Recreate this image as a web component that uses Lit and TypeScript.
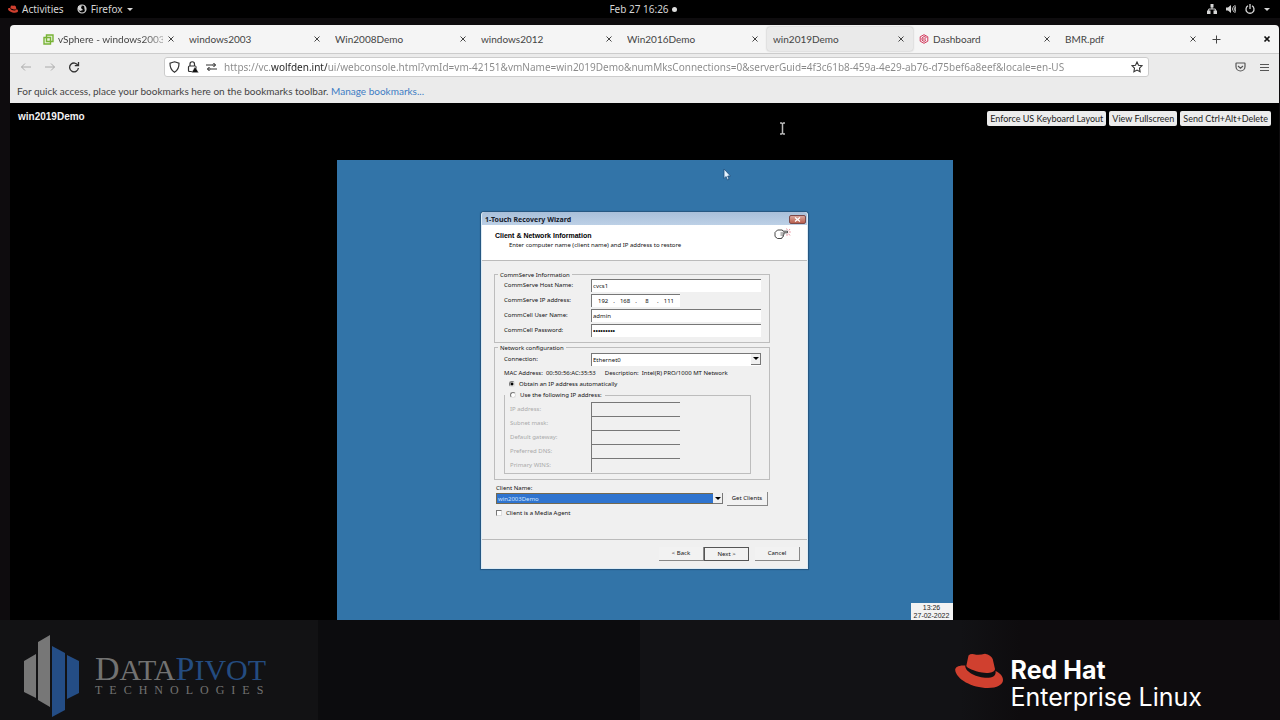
import { LitElement, html, css, svg, nothing } from "lit";
import { customElement, state } from "lit/decorators.js";
import { classMap } from "lit/directives/class-map.js";

const hat = svg`
  <path d="M11.300 13L13.500 2.500Q15.500.5 19 1.200 24 2.500 30 .7 36 2 37.700 6L40 16C40 20 32 20.500 27 19.600 19 18 12 15 11.300 13z"/>
  <path d="M10.300 12.500C3 12 0 14.500.2 17 1 26 17 35 33 35 42 35 48 31.500 48 27 48 23 45 20 40.500 18 41.500 23 37 25.200 30 24.800 20 24 9.500 18 10.300 12.500z"/>`;

@customElement("wizard-dialog")
class WizardDialog extends LitElement {
  static styles = css`
    :host { display: block; font: 6px/8px "Noto Sans", "Liberation Sans", sans-serif; color: #111; }
    * { box-sizing: border-box; }
    input, select, button { font: inherit; color: inherit; margin: 0; border-radius: 0; }
    .dialog { background: #f0f0f0; border: 1px solid #dcebf5; border-top: 0; box-shadow: 0 0 1px 1px #24557e; border-radius: 3px 3px 0 0; }
    .title { display: flex; justify-content: space-between; align-items: center; height: 13px; padding: 2px 1px 0 3px; background: linear-gradient(#a9bfd9, #bcd0e6); border-radius: 3px 3px 0 0; font: bold 7px/11px "Noto Sans", sans-serif; color: #16202c; }
    .close { width: 17px; height: 9px; padding: 0; border: 1px solid #7b4a4a; background: linear-gradient(#d9a79e, #b9604f); display: grid; place-items: center; border-radius: 2px; }
    .close svg { width: 7px; height: 5px; }
    .head { display: flex; justify-content: space-between; background: #fff; height: 36px; padding: 3px 16px 0 13px; border-bottom: 1px solid #bbb; }
    .intro { padding-top: 3px; }
    .head h1 { margin: 0; font: bold 7px/10px "Liberation Sans", sans-serif; color: #000; }
    .head p { margin: 0 0 0 14px; }
    .hand { width: 17px; height: 13px; }
    .body { padding: 10px 37px 0 12px; }
    fieldset { margin: 0; min-width: 0; border: 1px solid #bdbdbd; padding: 0 8px 0 9px; }
    legend { margin-left: -6px; padding: 0 2px; height: 8px; }
    .form { display: grid; grid-template-columns: 87px minmax(0, 1fr); row-gap: 2px; align-items: center; }
    .box { height: 13px; width: 100%; padding: 0 1px; background: #fff; border: solid #777; border-width: 1px 0 0 1px; outline: 0; }
    .box[type="password"] { font: 7px/8px "Liberation Sans", sans-serif; }
    .short { width: 89px; }
    .ip { display: flex; align-items: center; }
    .ip input { flex: 1; min-width: 0; width: 0; border: 0; padding: 0; text-align: center; background: none; outline: 0; }
    .group + .group { margin-top: 1px; }
    .first { padding-bottom: 5px; }
    .second { padding-bottom: 5px; }
    .second > .form { margin-top: 1px; }
    .drop { position: relative; display: block; }
    .drop select { appearance: none; width: 100%; height: 13px; padding: 0 12px 0 1px; background: #fff; border: solid #777; border-width: 1px 0 0 1px; display: block; outline: 0; }
    .arrow { position: absolute; right: 0; top: 1px; width: 10px; height: 11px; background: #f0f0f0; border: solid #777; border-width: 0 1px 1px 0; display: grid; place-items: center; pointer-events: none; }
    .arrow::after { content: ""; border: solid transparent; border-width: 3px 3px 0; border-top-color: #000; }
    .mac { margin: 3px 0 2px; display: flex; gap: 9px; white-space: nowrap; }
    .choice { display: flex; align-items: center; gap: 4px; height: 11px; }
    .choice input { appearance: none; width: 6px; height: 6px; background: #fff; border: 1px solid; border-color: #777 #ddd #ddd #777; flex: none; }
    .choice input[type="radio"] { border-radius: 50%; }
    .choice input[type="radio"]:checked { background: radial-gradient(circle, #000 0 1px, #fff 2px); }
    .radio { padding-left: 5px; }
    .manual { margin-right: 10px; padding: 0 0 1px 5px; }
    .manual legend { margin-left: -5px; padding: 0 3px 0 5px; height: 11px; }
    .manual .form { grid-template-columns: 81px 89px; row-gap: 0; color: #aaa; margin-top: 1px; }
    .manual .box { height: 14px; background: #f0f0f0; }
    .client { margin-top: 4px; padding: 0 2px; }
    .pick { display: grid; grid-template-columns: minmax(0, 1fr) 41px; gap: 4px; align-items: center; }
    .pick select { height: 11px; background: #2f74cf; border: 1px solid #74694f; color: #cfe4ff; }
    .pick .arrow { top: 0; }
    button { background: #f2f2f2; border: solid #888; border-width: 0 1px 1px 0; height: 14px; padding: 0; }
    .agent { margin-top: 2px; }
    .foot { display: flex; justify-content: flex-end; margin-top: 20px; padding: 7px 7px 7px 0; border-top: 1px solid #bbb; }
    .foot button { width: 45px; }
    .foot .next { border: 1px solid #555; }
    .foot .cancel { margin-left: 6px; }
  `;

  private row(id: string, label: string, field: unknown) {
    return html`<label for=${id}>${label}</label>${field}`;
  }

  render() {
    const manual = ["IP address:", "Subnet mask:", "Default gateway:", "Preferred DNS:", "Primary WINS:"];
    return html`<div class="dialog" role="dialog" aria-labelledby="t">
      <div class="title"><span id="t">1-Touch Recovery Wizard</span>
        <button class="close" aria-label="Close"><svg viewBox="0 0 7 5"><path d="M1 .5l5 4M6 .5l-5 4" stroke="#fff" stroke-width="1.300"/></svg></button></div>
      <div class="head"><div class="intro"><h1>Client &amp; Network Information</h1><p>Enter computer name (client name) and IP address to restore</p></div>
        <svg class="hand" viewBox="0 0 17 13"><path d="M1 4.500L3.500 2h4.800l.7 1.200h4.500v1.600H10v1.800l-.7.300v1.700l-1 .4-.6 1.500H3.500L1 8.500z" fill="#fff" stroke="#333" stroke-width=".9"/><path d="M6.500 5H10M6.500 7h2.800" stroke="#333" stroke-width=".7"/><path d="M12.500.5l1 1.700M16 1l-1.200 1.500M16.800 4h-2M16 7.500l-1.500-1.800M13 7.800V6" stroke="#e78a96" stroke-width=".9"/></svg></div>
      <div class="body">
        <fieldset class="group first"><legend>CommServe Information</legend>
          <div class="form">
            ${this.row("host", "CommServe Host Name:", html`<input id="host" class="box" value="cvcs1">`)}
            ${this.row("ip0", "CommServe IP address:", html`<div class="box short ip">
              ${["192", "168", "8", "111"].map((v, i) => html`${i ? html`<span>.</span>` : nothing}<input id="ip${i}" aria-label="Octet ${i + 1}" value=${v}>`)}</div>`)}
            ${this.row("user", "CommCell User Name:", html`<input id="user" class="box" value="admin">`)}
            ${this.row("pass", "CommCell Password:", html`<input id="pass" type="password" class="box" value="123456789">`)}
          </div></fieldset>
        <fieldset class="group second"><legend>Network configuration</legend>
          <div class="form">${this.row("conn", "Connection:", html`<span class="drop"><select id="conn"><option>Ethernet0</option></select><span class="arrow"></span></span>`)}</div>
          <div class="mac"><span>MAC Address: &nbsp;00:50:56:AC:35:53</span><span>Description: &nbsp;Intel(R) PRO/1000 MT Network</span></div>
          <label class="choice radio"><input type="radio" name="mode" checked>Obtain an IP address automatically</label>
          <fieldset class="manual"><legend><label class="choice"><input type="radio" name="mode">Use the following IP address:</label></legend>
            <div class="form">${manual.map((m, i) => this.row("m" + i, m, html`<input id="m${i}" class="box" disabled>`))}</div>
          </fieldset>
        </fieldset>
        <div class="client"><label for="client">Client Name:</label>
          <div class="pick"><span class="drop"><select id="client"><option>win2003Demo</option></select><span class="arrow"></span></span><button>Get Clients</button></div>
          <label class="choice agent"><input type="checkbox">Client is a Media Agent</label></div>
      </div>
      <div class="foot"><button>&lt; Back</button><button class="next">Next &gt;</button><button class="cancel">Cancel</button></div>
    </div>`;
  }
}

interface Tab { title: string; icon?: "vsphere" | "dash"; }

@customElement("app-root")
class AppRoot extends LitElement {
  @state() private active = 5;
  private tabs: Tab[] = [
    { title: "vSphere - windows2003", icon: "vsphere" }, { title: "windows2003" }, { title: "Win2008Demo" }, { title: "windows2012" },
    { title: "Win2016Demo" }, { title: "win2019Demo" }, { title: "Dashboard", icon: "dash" }, { title: "BMR.pdf" },
  ];

  static styles = css`
    :host { display: flex; flex-direction: column; min-height: 100vh; background: #0e0c0e; font: 10px/14px "Noto Sans", sans-serif; color: #444; }
    * { box-sizing: border-box; }
    button { font: inherit; color: inherit; border: 0; background: none; padding: 0; margin: 0; }
    svg { display: block; fill: none; stroke: currentColor; flex: none; }
    .bar { display: grid; grid-template-columns: 1fr auto 1fr; align-items: center; height: 18px; padding: 0 10px 0 8px; background: #000; color: #d6d6d6; }
    .left, .right, .clock { display: flex; align-items: center; }
    .left { gap: 13px; }
    .left button { display: flex; align-items: center; gap: 4px; }
    .right { justify-content: flex-end; gap: 9px; }
    .clock { gap: 3px; padding-left: 8px; }
    .dot { width: 5px; height: 5px; border-radius: 50%; background: #ddd; }
    .caret { border: solid transparent; border-width: 3px 3px 0; border-top-color: currentColor; }
    .solid { fill: currentColor; stroke: none; }
    .redhat { fill: #d0402f; stroke: none; }
    .window { flex: 1; display: flex; flex-direction: column; margin: 7px 1px 0 10px; border-radius: 4px 4px 0 0; overflow: hidden; background: #000; }
    .tabs { display: flex; height: 29px; padding: 0 8px 0 27px; background: #f5f5f5; border-bottom: 1px solid #ccc; align-items: center; font-family: Lato, sans-serif; }
    .tab { display: flex; align-items: center; flex: 0 1 146px; min-width: 0; height: 24px; padding: 0 8px 0 6px; gap: 4px; border-radius: 3px; }
    .tab.on { background: #eaeaea; box-shadow: 0 0 2px #aaa; }
    .green { color: #78b336; }
    .pink { color: #d3365a; }
    .name { flex: 1; min-width: 0; text-align: left; overflow: hidden; white-space: nowrap; }
    .name.long { -webkit-mask-image: linear-gradient(90deg, #000 80%, #0006); mask-image: linear-gradient(90deg, #000 80%, #0006); }
    .add { margin-left: 7px; }
    .quit { margin-left: auto; color: #111; }
    .nav { display: grid; grid-template-columns: 144px minmax(0, 1fr) 120px; align-items: center; height: 27px; background: #ebebeb; padding: 0 10px 1px; }
    .nav .left { gap: 12px; color: #aaa; }
    .nav .right { gap: 14px; color: #555; }
    .reload { color: #333; }
    .urlbar { display: flex; align-items: center; gap: 7px; height: 20px; padding: 0 5px 0 4px; background: #fff; border: 1px solid #ccc; border-radius: 3px; color: #333; }
    .url { flex: 1; min-width: 0; border: 0; outline: 0; padding: 0; font: inherit; color: transparent; background: linear-gradient(90deg, #888 46px, #222 46px 103px, #888 103px); -webkit-background-clip: text; background-clip: text; }
    .marks { background: #ebebeb; height: 22px; padding: 3px 7px 0 7px; font-family: Lato, sans-serif; }
    .marks a { color: #3d7cc4; text-decoration: none; }
    .console { display: flex; justify-content: space-between; padding: 8px 8px 0; height: 57px; align-items: flex-start; color: #f2f2f2; }
    .console h1 { margin: 0; font: bold 10px/12px "Liberation Sans", sans-serif; }
    .actions { display: flex; gap: 3px; }
    .actions button { background: #ececec; color: #222; border-radius: 2px; height: 15px; font: 9px/15px Lato, sans-serif; padding: 0 3px; }
    .desktop { position: relative; width: 616px; max-width: 100%; flex: 1; align-self: center; display: grid; place-items: center; background: #3274a8; }
    wizard-dialog { width: 327px; }
    .time { position: absolute; right: 0; bottom: 0; width: 42px; background: #f3f3f3; color: #222; font: 7px/8px "Liberation Sans", sans-serif; text-align: center; padding-top: 1px; white-space: nowrap; }
    .pointer { position: absolute; left: 386px; top: 8px; }
    .beam { position: absolute; left: 442px; top: -38px; }
    .brand { height: 100px; display: flex; justify-content: space-between; align-items: flex-start; padding: 15px 78px 0 24px; background: linear-gradient(90deg, #121214 0 318px, #0c0c0e 318px 640px, #121215 640px 960px, #0e0c0e 1020px); }
    .pivot, .rhel { display: flex; align-items: center; }
    .pivot { color: #727272; font-family: "Liberation Serif", serif; gap: 16px; }
    .word { font-size: 30px; line-height: 27px; }
    .word b { font-weight: 400; font-size: 34px; }
    .blue { color: #244c80; }
    .tech { font-size: 12px; line-height: 14px; letter-spacing: 7px; }
    .rhel { color: #fff; font: 25px/27px Inter, sans-serif; gap: 8px; margin-top: 18px; align-items: flex-start; }
    .names { margin-top: 4px; }
    .rhel strong { display: block; }
  `;

  private x() {
    return html`<svg width="8" height="8" viewBox="0 0 8 8"><path d="M1.500 1.500l5 5M6.500 1.500l-5 5"/></svg>`;
  }

  private icon(kind?: string) {
    if (kind === "vsphere") return html`<svg class="green" width="11" height="11" viewBox="0 0 11 11" stroke-width="1.400"><path d="M3.500 1h6.500v6.500H7.500V10H1V3.500h2.500z" fill="#e9f3dc"/><path d="M3.500 3.500h4v4h-4z"/></svg>`;
    if (kind === "dash") return html`<svg class="pink" width="10" height="10" viewBox="0 0 10 10"><path d="M5 .7l3.800 2.100v4.400L5 9.300 1.200 7.200V2.800zM7.500 3.500L5 2.500 3 4v2.200l2 1.200 2-1M3.500 5H7"/></svg>`;
    return nothing;
  }

  render() {
    return html`
      <header class="bar">
        <div class="left">
          <button><svg class="redhat" width="10" height="8" viewBox="0 0 48 35">${hat}</svg>Activities</button>
          <button><svg width="10" height="10" viewBox="0 0 10 10"><circle cx="5" cy="5" r="4" stroke-width="1.200"/><path class="solid" d="M1 2l2 .3L5 1 4 4l2 2-3 1-2-2zM7 1l2 3-1 4z"/></svg>Firefox<span class="caret"></span></button>
        </div>
        <div class="clock">Feb 27 16:26<span class="dot"></span></div>
        <div class="right">
          <svg width="10" height="10" viewBox="0 0 10 10"><path class="solid" d="M3.500 0h3v3.500h-3zM0 6.500h3.500V10H0zM6.500 6.500H10V10H6.500z"/><path d="M5 3v2M1.700 7V5h6.600v2"/></svg>
          <svg width="10" height="10" viewBox="0 0 10 10"><path class="solid" d="M0 3.500h2L5 1v8L2 6.500H0z"/><path d="M6.300 3.500q1 1.500 0 3M7.500 2q2 3 0 6M8.800 1q2 4 0 8" stroke-width=".9"/></svg>
          <svg width="10" height="10" viewBox="0 0 10 10"><path d="M3 1.800a4 4 0 1 0 4 0M5 0v5" stroke-width="1.300"/></svg>
          <span class="caret"></span>
        </div>
      </header>
      <main class="window">
        <nav class="tabs">
          ${this.tabs.map((t, i) => html`<div class=${classMap({ tab: true, on: i === this.active })}>
            ${this.icon(t.icon)}<button class=${classMap({ name: true, long: i === 0 })} @click=${() => (this.active = i)}>${t.title}</button><button aria-label="Close tab">${this.x()}</button></div>`)}
          <button class="add" aria-label="New tab"><svg width="9" height="9" viewBox="0 0 9 9"><path d="M4.500 .5v8M.5 4.500h8"/></svg></button>
          <button class="quit" aria-label="Close window"><svg width="8" height="8" viewBox="0 0 8 8" stroke-width="1.700"><path d="M1.500 1.500l5 5M6.500 1.500l-5 5"/></svg></button>
        </nav>
        <div class="nav">
          <div class="left">
            <button aria-label="Back"><svg width="12" height="10" viewBox="0 0 12 10"><path d="M11 5H1.500M5 1.500L1.500 5 5 8.500"/></svg></button>
            <button aria-label="Forward"><svg width="12" height="10" viewBox="0 0 12 10"><path d="M1 5h9.500M7 1.500L10.500 5 7 8.500"/></svg></button>
            <button class="reload" aria-label="Reload"><svg width="12" height="12" viewBox="0 0 12 12" stroke-width="1.300"><path d="M10 4.500A4.400 4.400 0 1 0 10.400 7M10.500 1v3.700H6.800"/></svg></button>
          </div>
          <div class="urlbar">
            <svg width="11" height="12" viewBox="0 0 11 12" stroke-width="1.200"><path d="M5.500.8l4.500 1.500c.1 4-1 7-4.500 8.900C2 9.300.9 6.300 1 2.300z"/></svg>
            <svg width="12" height="12" viewBox="0 0 12 12" stroke-width="1.200"><rect x="1.500" y="5" width="7.500" height="5.500" rx="1"/><path d="M3 5V3a2.200 2.200 0 0 1 4.500 0v2"/><path d="M8 5.500l3.800 6.200H4.500z" fill="#111" stroke="#fff" stroke-width=".5"/></svg>
            <svg width="11" height="8" viewBox="0 0 11 8"><path d="M0 2h6M5 6h6M9.500 2H8M1.500 6H3"/><circle cx="8" cy="2" r="1.300"/><circle cx="3" cy="6" r="1.300"/></svg>
            <input class="url" aria-label="Address" value="https://vc.wolfden.int/ui/webconsole.html?vmId=vm-42151&vmName=win2019Demo&numMksConnections=0&serverGuid=4f3c61b8-459a-4e29-ab76-d75bef6a8eef&locale=en-US">
            <svg width="12" height="12" viewBox="0 0 12 12" stroke-width="1.100"><path d="M6 1l1.500 3.200 3.500.5-2.500 2.500.6 3.600L6 9.100l-3.100 1.700.6-3.600L1 4.700l3.500-.5z"/></svg>
          </div>
          <div class="right">
            <svg width="11" height="10" viewBox="0 0 11 10" stroke-width="1.200"><path d="M1.500 1h8q.5 0 .5.500V4.500a4.500 4.500 0 0 1-9 0V1.500Q1 1 1.500 1zM3 4l2.500 2.200L8 4"/></svg>
            <button aria-label="Menu"><svg width="9" height="9" viewBox="0 0 9 9"><path d="M0 1.500h9M0 4.500h9M0 7.500h9"/></svg></button>
          </div>
        </div>
        <div class="marks">For quick access, place your bookmarks here on the bookmarks toolbar. <a href="#">Manage bookmarks...</a></div>
        <div class="console"><h1>win2019Demo</h1>
          <div class="actions"><button>Enforce US Keyboard Layout</button><button>View Fullscreen</button><button>Send Ctrl+Alt+Delete</button></div></div>
        <section class="desktop">
          <wizard-dialog></wizard-dialog>
          <svg class="beam" width="7" height="13" viewBox="0 0 7 13"><path d="M1 1h1.500l1 1 1-1H6M3.500 2v9M1 12h1.500l1-1 1 1H6" stroke="#bbb" stroke-width="1.500"/></svg>
          <svg class="pointer" width="9" height="14" viewBox="0 0 9 14"><path d="M1 1v9.500l2-2 1.500 3.500 1.500-.7L4.700 8H7.500z" fill="#e6f4ff" stroke="#1f4c78" stroke-width=".8"/></svg>
          <div class="time">13:26<br>27-02-2022</div>
        </section>
      </main>
      <footer class="brand">
        <div class="pivot">
          <svg class="solid" width="55" height="82" viewBox="0 0 55 82"><path fill="#777" d="M0 26l12-7v44L0 57zM14 7l12-7v72l-12-7z"/><path fill="#244d85" d="M28 11l13 7v57l-13 7zM43 20l12 6v32l-12 6z"/></svg>
          <div><div class="word"><b>D</b>ATA<span class="blue"><b>P</b>IVOT</span></div><div class="tech">TECHNOLOGIES</div></div>
        </div>
        <div class="rhel"><svg class="redhat" width="48" height="35" viewBox="0 0 48 35">${hat}</svg><div class="names"><strong>Red Hat</strong>Enterprise Linux</div></div>
      </footer>`;
  }
}
